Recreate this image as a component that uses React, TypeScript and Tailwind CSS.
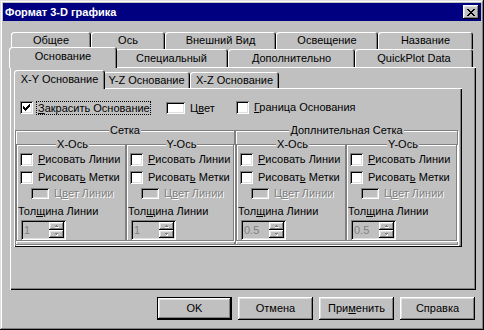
import React from "react";

const raised =
  "shadow-[inset_-1px_-1px_#000,inset_1px_1px_#fff,inset_-2px_-2px_#808080,inset_2px_2px_#dfdfdf]";
const sunken =
  "shadow-[inset_1px_1px_#808080,inset_-1px_-1px_#fff,inset_2px_2px_#000,inset_-2px_-2px_#dfdfdf]";
const panel =
  "shadow-[inset_1px_1px_#fff,inset_-1px_-1px_#000,inset_-2px_-2px_#808080]";
const tabShadow =
  "shadow-[inset_1px_1px_#fff,inset_-1px_0_#000,inset_-2px_0_#808080]";
const groove =
  "border border-[#808080] shadow-[inset_1px_1px_#fff,1px_1px_#fff]";
const disabled = "text-[#808080] [text-shadow:1px_1px_0_#fff]";

function U({ children }: { children: React.ReactNode }) {
  return <span className="underline underline-offset-[1px]">{children}</span>;
}

function Check({ checked }: { checked?: boolean }) {
  return (
    <div className={`w-[13px] h-[13px] shrink-0 bg-white ${sunken} flex items-center justify-center`}>
      {checked && (
        <svg width="7" height="7" viewBox="0 0 7 7" shapeRendering="crispEdges">
          <rect x="6" y="0" width="1" height="1" fill="#000" />
          <rect x="5" y="1" width="2" height="1" fill="#000" />
          <rect x="0" y="2" width="1" height="1" fill="#000" />
          <rect x="4" y="2" width="3" height="1" fill="#000" />
          <rect x="0" y="3" width="2" height="1" fill="#000" />
          <rect x="3" y="3" width="3" height="1" fill="#000" />
          <rect x="0" y="4" width="5" height="1" fill="#000" />
          <rect x="1" y="5" width="3" height="1" fill="#000" />
          <rect x="2" y="6" width="1" height="1" fill="#000" />
        </svg>
      )}
    </div>
  );
}

function Arrow({ up }: { up?: boolean }) {
  return (
    <svg width="5" height="3" viewBox="0 0 5 3" shapeRendering="crispEdges">
      {up ? (
        <>
          <rect x="2" y="0" width="1" height="1" fill="#808080" />
          <rect x="1" y="1" width="3" height="1" fill="#808080" />
          <rect x="1" y="2" width="4" height="1" fill="#fff" />
        </>
      ) : (
        <>
          <rect x="1" y="0" width="3" height="1" fill="#808080" />
          <rect x="2" y="1" width="1" height="1" fill="#808080" />
          <rect x="3" y="1" width="1" height="1" fill="#fff" />
          <rect x="2" y="2" width="2" height="1" fill="#fff" />
        </>
      )}
    </svg>
  );
}

function Spin({ value }: { value: string }) {
  return (
    <div className={`ml-[1px] mt-[2px] w-[45px] h-[20px] bg-[#c0c0c0] ${sunken} flex p-[2px]`}>
      <div className="flex-1 pl-[1px] leading-[16px] text-[#808080]">{value}</div>
      <div className="w-[15px] flex flex-col">
        <div className={`h-[8px] ${raised} flex items-center justify-center`}>
          <Arrow up />
        </div>
        <div className={`h-[8px] ${raised} flex items-center justify-center`}>
          <Arrow />
        </div>
      </div>
    </div>
  );
}

function Axis({ title, w, val }: { title: string; w: string; val: string }) {
  return (
    <fieldset className={`${w} ${groove} pl-[3px]`}>
      <legend className="mx-auto px-[1px] bg-[#c0c0c0] leading-[13px]">{title}</legend>
      <div className="flex items-center h-[13px] mt-[2px]">
        <Check />
        <span className="ml-[5px] whitespace-nowrap">
          <U>Р</U>исовать Линии
        </span>
      </div>
      <div className="flex items-center h-[13px] mt-[5px]">
        <Check />
        <span className="ml-[5px] whitespace-nowrap">
          Рисоват<U>ь</U> Метки
        </span>
      </div>
      <div className="flex items-center h-[11px] mt-[4px] pl-[11px]">
        <div className={`w-[18px] h-[11px] bg-[#c0c0c0] ${sunken}`} />
        <span className={`ml-[5px] whitespace-nowrap ${disabled}`}>
          Ц<U>в</U>ет Линии
        </span>
      </div>
      <div className="mt-[6px] h-[13px] -ml-[2px] whitespace-nowrap">
        Тол<U>щ</U>ина Линии
      </div>
      <Spin value={val} />
    </fieldset>
  );
}

function Tab({ label, w, selected }: { label: string; w: string; selected?: boolean }) {
  return (
    <div
      className={`${w} ${
        selected ? "relative z-10 -mt-[2px] -mx-[2px] h-[21px] pb-[2px]" : "h-full"
      } shrink-0 bg-[#c0c0c0] rounded-t-[3px] ${tabShadow} flex items-center justify-center whitespace-nowrap`}
    >
      {label}
    </div>
  );
}

function ITab({ label, w, selected }: { label: string; w: string; selected?: boolean }) {
  return (
    <div
      className={`${w} ${
        selected ? "relative z-10 -mt-[2px] -mx-[2px] h-[19px] pb-[1px]" : "h-full"
      } shrink-0 bg-[#c0c0c0] rounded-t-[3px] ${tabShadow} flex items-center justify-center whitespace-nowrap`}
    >
      {label}
    </div>
  );
}

export default function App() {
  return (
    <div
      className={`w-[484px] h-[330px] bg-[#c0c0c0] p-[3px] flex flex-col text-[11px] leading-[13px] text-black font-['Liberation_Sans',Arial,sans-serif] shadow-[inset_-1px_-1px_#000,inset_1px_1px_#dfdfdf,inset_-2px_-2px_#808080,inset_2px_2px_#fff]`}
    >
      {/* Title bar */}
      <div className="h-[18px] bg-[#000080] flex items-center pl-[2px] pr-[2px] shrink-0">
        <span className="text-white font-bold text-[11px] flex-1 whitespace-nowrap">
          Формат 3-D графика
        </span>
        <div className={`w-[16px] h-[14px] bg-[#c0c0c0] ${raised} flex items-center justify-center`}>
          <svg width="8" height="7" viewBox="0 0 8 7" shapeRendering="crispEdges">
            <rect x="0" y="0" width="2" height="1" fill="#000" />
            <rect x="6" y="0" width="2" height="1" fill="#000" />
            <rect x="1" y="1" width="2" height="1" fill="#000" />
            <rect x="5" y="1" width="2" height="1" fill="#000" />
            <rect x="2" y="2" width="4" height="1" fill="#000" />
            <rect x="3" y="3" width="2" height="1" fill="#000" />
            <rect x="2" y="4" width="4" height="1" fill="#000" />
            <rect x="1" y="5" width="2" height="1" fill="#000" />
            <rect x="5" y="5" width="2" height="1" fill="#000" />
            <rect x="0" y="6" width="2" height="1" fill="#000" />
            <rect x="6" y="6" width="2" height="1" fill="#000" />
          </svg>
        </div>
      </div>

      {/* Tab control */}
      <div className="pl-[7px] pt-[11px] flex flex-col">
        <div className="flex h-[17px] pl-[1px]">
          <Tab w="w-[80px]" label="Общее" />
          <Tab w="w-[74px]" label="Ось" />
          <Tab w="w-[111px]" label="Внешний Вид" />
          <Tab w="w-[102px]" label="Освещение" />
          <Tab w="w-[95px]" label="Название" />
        </div>
        <div className="flex h-[18px] pl-[1px]">
          <Tab w="w-[108px]" label="Основание" selected />
          <Tab w="w-[113px]" label="Специальный" />
          <Tab w="w-[127px]" label="Дополнительно" />
          <Tab w="w-[118px]" label="QuickPlot Data" />
        </div>
        <div className={`w-[466px] h-[223px] bg-[#c0c0c0] ${panel} pt-[5px] pl-[4px] flex flex-col`}>
          <div className="flex h-[16px] pl-[2px]">
            <ITab w="w-[91px]" label="X-Y Основание" selected />
            <ITab w="w-[87px]" label="Y-Z Основание" />
            <ITab w="w-[89px]" label="X-Z Основание" />
          </div>
          <div className={`w-[448px] h-[159px] bg-[#c0c0c0] ${panel} pt-[13px] pl-[6px] flex flex-col`}>
            <div className="flex items-center h-[13px]">
              <Check checked />
              <div className="ml-[3px] w-[115px] h-[14px] mt-[1px] border border-dotted border-black flex items-center pl-[1px] whitespace-nowrap">
                <span>
                  <U>З</U>акрасить Основание
                </span>
              </div>
              <div className={`ml-[15px] w-[19px] h-[12px] bg-white ${sunken}`} />
              <span className="ml-[5px] w-[46px] mt-[2px]">
                Ц<U>в</U>ет
              </span>
              <Check />
              <span className="ml-[5px] whitespace-nowrap">
                <U>Г</U>раница Основания
              </span>
            </div>

            <div className="flex mt-[10px] -ml-[5px]">
              <fieldset className={`w-[220px] ${groove} pb-[3px]`}>
                <legend className="mx-auto px-[1px] bg-[#c0c0c0] leading-[13px]">Сетка</legend>
                <div className="flex mt-[1px]">
                  <Axis title="X-Ось" w="w-[110px]" val="1" />
                  <Axis title="Y-Ось" w="w-[108px]" val="1" />
                </div>
              </fieldset>
              <fieldset className={`w-[223px] ${groove} pb-[3px]`}>
                <legend className="mx-auto px-[1px] bg-[#c0c0c0] leading-[13px]">
                  Доплнительная Сетка
                </legend>
                <div className="flex mt-[1px]">
                  <Axis title="X-Ось" w="w-[110px]" val="0.5" />
                  <Axis title="Y-Ось" w="w-[111px]" val="0.5" />
                </div>
              </fieldset>
            </div>
          </div>
        </div>
      </div>

      {/* Buttons */}
      <div className="flex justify-end gap-[6px] pr-[6px] mt-[7px]">
        <button className={`w-[75px] h-[23px] bg-[#c0c0c0] border border-black ${raised} flex items-center justify-center`}>
          OK
        </button>
        <button className={`w-[75px] h-[23px] bg-[#c0c0c0] ${raised} flex items-center justify-center`}>
          Отмена
        </button>
        <button className={`w-[75px] h-[23px] bg-[#c0c0c0] ${raised} flex items-center justify-center`}>
          При<U>м</U>енить
        </button>
        <button className={`w-[75px] h-[23px] bg-[#c0c0c0] ${raised} flex items-center justify-center`}>
          Справка
        </button>
      </div>
    </div>
  );
}
